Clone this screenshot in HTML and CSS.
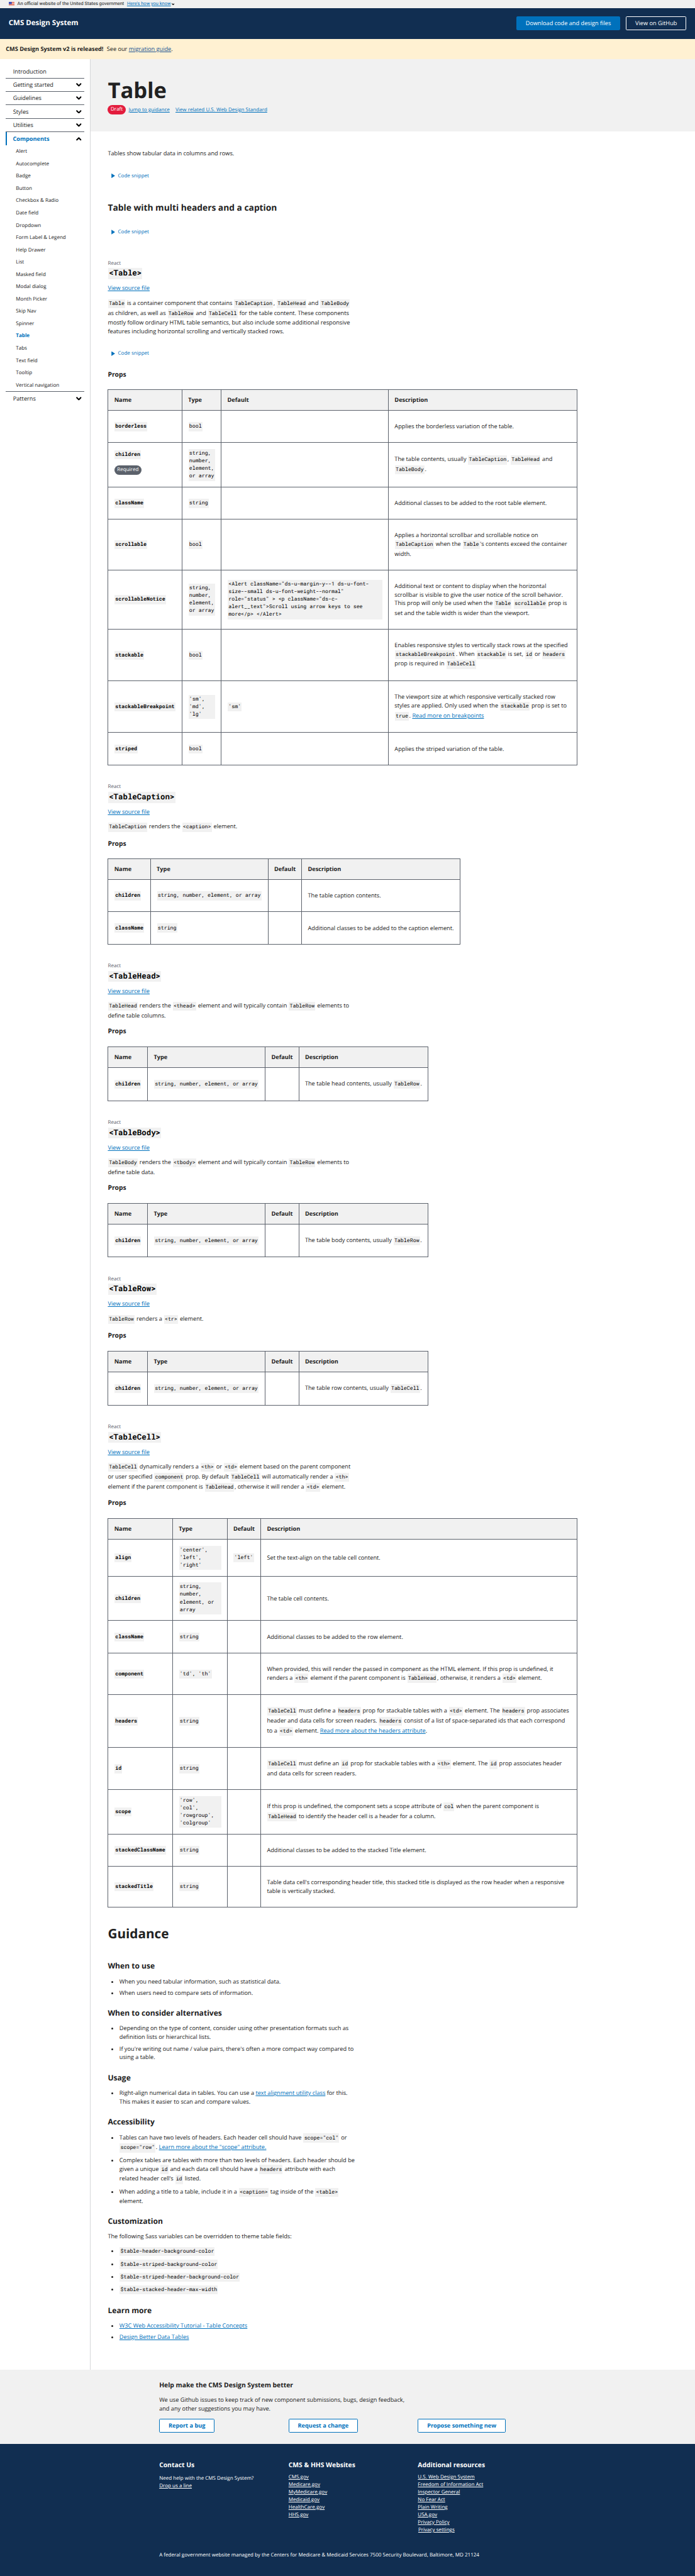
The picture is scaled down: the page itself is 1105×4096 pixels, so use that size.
FILE: index.html
```html
<!DOCTYPE html>
<html lang="en">
<head>
<meta charset="utf-8">
<title>Table - CMS Design System</title>
<link rel="stylesheet" href="styles.css">
</head>
<body>
<svg class="defs" aria-hidden="true">
  <symbol id="chevron" viewBox="0 0 15 10"><path d="M2 2.2 7.5 7.8 13 2.2" fill="none" stroke="#000" stroke-width="3.6" stroke-linejoin="round" stroke-linecap="round"/></symbol>
</svg>

<div class="gov-banner">
  <svg class="flag" viewBox="0 0 16 11"><rect width="16" height="11" fill="#fff"/><path d="M0 .8h16M0 3.2h16M0 5.6h16M0 8h16M0 10.4h16" stroke="#db3e1f" stroke-width="1.3"/><rect width="8" height="6.2" fill="#1e33b1"/><path d="M1 1.5h6M1 3.2h6M1 4.9h6" stroke="#fff" stroke-width=".7" stroke-dasharray=".8 1"/></svg>
  <span>An official website of the United States government</span>
  <a class="banner-link" href="#">Here's how you know</a><svg class="banner-chevron"><use href="#chevron"/></svg>
</div>

<header class="site-header">
  <span class="site-title">CMS Design System</span>
  <nav class="header-actions">
    <a class="btn btn-primary" href="#">Download code and design files</a>
    <a class="btn btn-ghost" href="#">View on GitHub</a>
  </nav>
</header>

<div class="release-note"><b>CMS Design System v2 is released!</b><span>See our <a href="#">migration guide</a>.</span></div>

<div class="layout">
  <aside class="sidebar">
    <ul class="nav">
      <li class="nav-item">Introduction</li>
      <li class="nav-item">Getting started<svg class="chev"><use href="#chevron"/></svg></li>
      <li class="nav-item">Guidelines<svg class="chev"><use href="#chevron"/></svg></li>
      <li class="nav-item">Styles<svg class="chev"><use href="#chevron"/></svg></li>
      <li class="nav-item">Utilities<svg class="chev"><use href="#chevron"/></svg></li>
      <li class="nav-item nav-open">Components<svg class="chev chev-up"><use href="#chevron"/></svg></li>
    </ul>
    <ul class="subnav">
      <li>Alert</li><li>Autocomplete</li><li>Badge</li><li>Button</li><li>Checkbox &amp; Radio</li><li>Date field</li><li>Dropdown</li><li>Form Label &amp; Legend</li><li>Help Drawer</li><li>List</li><li>Masked field</li><li>Modal dialog</li><li>Month Picker</li><li>Skip Nav</li><li>Spinner</li><li class="current">Table</li><li>Tabs</li><li>Text field</li><li>Tooltip</li><li>Vertical navigation</li>
    </ul>
    <ul class="nav">
      <li class="nav-item nav-last">Patterns<svg class="chev"><use href="#chevron"/></svg></li>
    </ul>
  </aside>

  <main class="main">
    <div class="hero">
      <h1>Table</h1>
      <div class="hero-links"><span class="badge badge-draft">Draft</span><a href="#">Jump to guidance</a><a href="#">View related U.S. Web Design Standard</a></div>
    </div>

    <div class="content">
      <p class="intro">Tables show tabular data in columns and rows.</p>
      <div class="snippet">Code snippet</div>
      <h3 class="example-title">Table with multi headers and a caption</h3>
      <div class="snippet">Code snippet</div>

      <section class="component component-first">
        <div class="eyebrow">React</div>
        <h3 class="component-name"><code>&lt;Table&gt;</code></h3>
        <a class="source" href="#">View source file</a>
        <p class="desc desc-main"><code>Table</code> is a container component that contains <code>TableCaption</code>, <code>TableHead</code> and <code>TableBody</code> as children, as well as <code>TableRow</code> and <code>TableCell</code> for the table content. These components mostly follow ordinary HTML table semantics, but also include some additional responsive features including horizontal scrolling and vertically stacked rows.</p>
        <div class="snippet">Code snippet</div>
        <h4 class="props-title">Props</h4>
        <table class="props props-table">
          <thead><tr><th class="name">Name</th><th class="type">Type</th><th class="default">Default</th><th>Description</th></tr></thead>
          <tbody>
            <tr class="h89"><th><code>borderless</code></th><td><code>bool</code></td><td></td><td>Applies the borderless variation of the table.</td></tr>
            <tr class="h123"><th class="with-badge"><code>children</code><span class="badge badge-required">Required</span></th><td><code>string, number, element, or array</code></td><td></td><td>The table contents, usually <code>TableCaption</code>, <code>TableHead</code> and <code>TableBody</code>.</td></tr>
            <tr class="h89"><th><code>className</code></th><td><code>string</code></td><td></td><td>Additional classes to be added to the root table element.</td></tr>
            <tr class="h140"><th><code>scrollable</code></th><td><code>bool</code></td><td></td><td>Applies a horizontal scrollbar and scrollable notice on <code>TableCaption</code> when the <code>Table</code>'s contents exceed the container width.</td></tr>
            <tr class="h164"><th><code>scrollableNotice</code></th><td><code>string, number, element, or array</code></td><td><code>&lt;Alert className="ds-u-margin-y--1 ds-u-font-size--small ds-u-font-weight--normal" role="status" &gt; &lt;p className="ds-c-alert__text"&gt;Scroll using arrow keys to see more&lt;/p&gt; &lt;/Alert&gt;</code></td><td>Additional text or content to display when the horizontal scrollbar is visible to give the user notice of the scroll behavior. This prop will only be used when the <code>Table</code> <code>scrollable</code> prop is set and the table width is wider than the viewport.</td></tr>
            <tr class="h143"><th><code>stackable</code></th><td><code>bool</code></td><td></td><td>Enables responsive styles to vertically stack rows at the specified <code>stackableBreakpoint</code>. When <code>stackable</code> is set, <code>id</code> or <code>headers</code> prop is required in <code>TableCell</code></td></tr>
            <tr class="h143"><th><code>stackableBreakpoint</code></th><td><code>'sm', 'md', 'lg'</code></td><td><code>'sm'</code></td><td>The viewport size at which responsive vertically stacked row styles are applied. Only used when the <code>stackable</code> prop is set to <code>true</code>. <a href="#">Read more on breakpoints</a></td></tr>
            <tr class="h89"><th><code>striped</code></th><td><code>bool</code></td><td></td><td>Applies the striped variation of the table.</td></tr>
          </tbody>
        </table>
      </section>

      <section class="component">
        <div class="eyebrow">React</div>
        <h3 class="component-name"><code>&lt;TableCaption&gt;</code></h3>
        <a class="source" href="#">View source file</a>
        <p class="desc desc-1"><code>TableCaption</code> renders the <code>&lt;caption&gt;</code> element.</p>
        <h4 class="props-title">Props</h4>
        <table class="props props-caption">
          <thead><tr><th class="name">Name</th><th class="type">Type</th><th class="default">Default</th><th>Description</th></tr></thead>
          <tbody>
            <tr class="h89"><th><code>children</code></th><td><code>string, number, element, or array</code></td><td></td><td>The table caption contents.</td></tr>
            <tr class="h89"><th><code>className</code></th><td><code>string</code></td><td></td><td>Additional classes to be added to the caption element.</td></tr>
          </tbody>
        </table>
      </section>

      <section class="component">
        <div class="eyebrow">React</div>
        <h3 class="component-name"><code>&lt;TableHead&gt;</code></h3>
        <a class="source" href="#">View source file</a>
        <p class="desc desc-2"><code>TableHead</code> renders the <code>&lt;thead&gt;</code> element and will typically contain <code>TableRow</code> elements to define table columns.</p>
        <h4 class="props-title">Props</h4>
        <table class="props props-small">
          <thead><tr><th class="name">Name</th><th class="type">Type</th><th class="default">Default</th><th>Description</th></tr></thead>
          <tbody>
            <tr class="h92"><th><code>children</code></th><td><code>string, number, element, or array</code></td><td></td><td>The table head contents, usually <code>TableRow</code>.</td></tr>
          </tbody>
        </table>
      </section>

      <section class="component">
        <div class="eyebrow">React</div>
        <h3 class="component-name"><code>&lt;TableBody&gt;</code></h3>
        <a class="source" href="#">View source file</a>
        <p class="desc desc-2"><code>TableBody</code> renders the <code>&lt;tbody&gt;</code> element and will typically contain <code>TableRow</code> elements to define table data.</p>
        <h4 class="props-title">Props</h4>
        <table class="props props-small">
          <thead><tr><th class="name">Name</th><th class="type">Type</th><th class="default">Default</th><th>Description</th></tr></thead>
          <tbody>
            <tr class="h92"><th><code>children</code></th><td><code>string, number, element, or array</code></td><td></td><td>The table body contents, usually <code>TableRow</code>.</td></tr>
          </tbody>
        </table>
      </section>

      <section class="component">
        <div class="eyebrow">React</div>
        <h3 class="component-name"><code>&lt;TableRow&gt;</code></h3>
        <a class="source" href="#">View source file</a>
        <p class="desc desc-1"><code>TableRow</code> renders a <code>&lt;tr&gt;</code> element.</p>
        <h4 class="props-title">Props</h4>
        <table class="props props-small">
          <thead><tr><th class="name">Name</th><th class="type">Type</th><th class="default">Default</th><th>Description</th></tr></thead>
          <tbody>
            <tr class="h92"><th><code>children</code></th><td><code>string, number, element, or array</code></td><td></td><td>The table row contents, usually <code>TableCell</code>.</td></tr>
          </tbody>
        </table>
      </section>

      <section class="component">
        <div class="eyebrow">React</div>
        <h3 class="component-name"><code>&lt;TableCell&gt;</code></h3>
        <a class="source" href="#">View source file</a>
        <p class="desc desc-3"><code>TableCell</code> dynamically renders a <code>&lt;th&gt;</code> or <code>&lt;td&gt;</code> element based on the parent component or user specified <code>component</code> prop. By default <code>TableCell</code> will automatically render a <code>&lt;th&gt;</code> element if the parent component is <code>TableHead</code>, otherwise it will render a <code>&lt;td&gt;</code> element.</p>
        <h4 class="props-title">Props</h4>
        <table class="props props-cell">
          <thead><tr><th class="name">Name</th><th class="type">Type</th><th class="default">Default</th><th>Description</th></tr></thead>
          <tbody>
            <tr class="h102"><th><code>align</code></th><td><code class="block">'center',<br>'left',<br>'right'</code></td><td><code>'left'</code></td><td>Set the text-align on the table cell content.</td></tr>
            <tr class="h123"><th><code>children</code></th><td><code>string, number, element, or array</code></td><td></td><td>The table cell contents.</td></tr>
            <tr class="h89"><th><code>className</code></th><td><code>string</code></td><td></td><td>Additional classes to be added to the row element.</td></tr>
            <tr class="h116"><th><code>component</code></th><td><code>'td', 'th'</code></td><td></td><td>When provided, this will render the passed in component as the HTML element. If this prop is undefined, it renders a <code>&lt;th&gt;</code> element if the parent component is <code>TableHead</code>, otherwise, it renders a <code>&lt;td&gt;</code> element.</td></tr>
            <tr class="h146"><th><code>headers</code></th><td><code>string</code></td><td></td><td><code>TableCell</code> must define a <code>headers</code> prop for stackable tables with a <code>&lt;td&gt;</code> element. The <code>headers</code> prop associates header and data cells for screen readers. <code>headers</code> consist of a list of space-separated ids that each correspond to a <code>&lt;td&gt;</code> element. <a href="#">Read more about the headers attribute</a>.</td></tr>
            <tr class="h116"><th><code>id</code></th><td><code>string</code></td><td></td><td><code>TableCell</code> must define an <code>id</code> prop for stackable tables with a <code>&lt;th&gt;</code> element. The <code>id</code> prop associates header and data cells for screen readers.</td></tr>
            <tr class="h123"><th><code>scope</code></th><td><code class="block">'row',<br>'col',<br>'rowgroup',<br>'colgroup'</code></td><td></td><td>If this prop is undefined, the component sets a scope attribute of <code>col</code> when the parent component is<br><code>TableHead</code> to identify the header cell is a header for a column.</td></tr>
            <tr class="h89"><th><code>stackedClassName</code></th><td><code>string</code></td><td></td><td>Additional classes to be added to the stacked Title element.</td></tr>
            <tr class="h113"><th><code>stackedTitle</code></th><td><code>string</code></td><td></td><td>Table data cell's corresponding header title, this stacked title is displayed as the row header when a responsive table is vertically stacked.</td></tr>
          </tbody>
        </table>
      </section>

      <section class="guidance">
        <h2>Guidance</h2>
        <div class="topic">
          <h3>When to use</h3>
          <ul><li>When you need tabular information, such as statistical data.</li><li>When users need to compare sets of information.</li></ul>
        </div>
        <div class="topic topic-alt">
          <h3>When to consider alternatives</h3>
          <ul><li>Depending on the type of content, consider using other presentation formats such as definition lists or hierarchical lists.</li><li>If you're writing out name / value pairs, there's often a more compact way compared to using a table.</li></ul>
        </div>
        <div class="topic topic-usage">
          <h3>Usage</h3>
          <ul><li>Right-align numerical data in tables. You can use a <a href="#">text alignment utility class</a> for this. This makes it easier to scan and compare values.</li></ul>
        </div>
        <div class="topic topic-a11y">
          <h3>Accessibility</h3>
          <ul>
            <li>Tables can have two levels of headers. Each header cell should have <code>scope="col"</code> or <code>scope="row"</code>. <a href="#">Learn more about the "scope" attribute.</a></li>
            <li>Complex tables are tables with more than two levels of headers. Each header should be given a unique <code>id</code> and each data cell should have a <code>headers</code> attribute with each<br>related header cell’s <code>id</code> listed.</li>
            <li>When adding a title to a table, include it in a <code>&lt;caption&gt;</code> tag inside of the <code>&lt;table&gt;</code> element.</li>
          </ul>
        </div>
        <div class="topic topic-custom">
          <h3>Customization</h3>
          <p>The following Sass variables can be overridden to theme table fields:</p>
          <ul class="variables"><li><code>$table-header-background-color</code></li><li><code>$table-striped-background-color</code></li><li><code>$table-striped-header-background-color</code></li><li><code>$table-stacked-header-max-width</code></li></ul>
        </div>
        <div class="topic topic-more">
          <h3>Learn more</h3>
          <ul><li><a href="#">W3C Web Accessibility Tutorial - Table Concepts</a></li><li><a href="#">Design Better Data Tables</a></li></ul>
        </div>
      </section>
    </div>
  </main>
</div>

<section class="feedback">
  <h4>Help make the CMS Design System better</h4>
  <p>We use Github issues to keep track of new component submissions, bugs, design feedback,<br>and any other suggestions you may have.</p>
  <div class="columns">
    <div><a class="btn btn-outline" href="#">Report a bug</a></div>
    <div><a class="btn btn-outline" href="#">Request a change</a></div>
    <div><a class="btn btn-outline" href="#">Propose something new</a></div>
  </div>
</section>

<footer class="site-footer">
  <div class="columns">
    <div>
      <h4>Contact Us</h4>
      <p>Need help with the CMS Design System?<br><a href="#">Drop us a line</a></p>
    </div>
    <div>
      <h4>CMS &amp; HHS Websites</h4>
      <ul><li><a href="#">CMS.gov</a></li><li><a href="#">Medicare.gov</a></li><li><a href="#">MyMedicare.gov</a></li><li><a href="#">Medicaid.gov</a></li><li><a href="#">HealthCare.gov</a></li><li><a href="#">HHS.gov</a></li></ul>
    </div>
    <div>
      <h4>Additional resources</h4>
      <ul><li><a href="#">U.S. Web Design System</a></li><li><a href="#">Freedom of Information Act</a></li><li><a href="#">Inspector General</a></li><li><a href="#">No Fear Act</a></li><li><a href="#">Plain Writing</a></li><li><a href="#">USA.gov</a></li><li><a href="#">Privacy Policy</a></li><li class="settings"><a href="#">Privacy settings</a></li></ul>
    </div>
  </div>
  <p class="address">A federal government website managed by the Centers for Medicare &amp; Medicaid Services 7500 Security Boulevard, Baltimore, MD 21124</p>
</footer>
</body>
</html>
```
FILE: styles.css
```css
/* One rem is 100 design pixels; the page is laid out on a 19.2rem canvas. */
html { font-size: 57.53px; }
* { box-sizing: border-box; margin: 0; padding: 0; }
body {
  font: .16rem/.24rem "Open Sans", "Noto Sans", sans-serif;
  color: #212121;
  background: #fff;
  text-rendering: geometricPrecision;
}
ul { list-style: none; }
a { color: #0071bc; text-decoration: underline; }
code {
  display: inline-block;
  margin: .01rem;
  padding: .02rem;
  font: .144rem/.21rem "Roboto Mono", "DejaVu Sans Mono", monospace;
  color: #000;
  background: #f1f1f1;
}
.defs { display: none; }

/* Government banner */
.gov-banner {
  display: flex;
  align-items: center;
  height: .22rem;
  padding-left: .24rem;
  font: .13rem/.22rem Roboto, sans-serif;
  background: #f0f0f0;
}
.flag { width: .16rem; height: .11rem; margin-right: .08rem; }
.banner-link { margin-left: .08rem; }
.banner-chevron { width: .08rem; height: .06rem; margin-left: .02rem; }

/* Header */
.site-header {
  display: flex;
  align-items: center;
  justify-content: space-between;
  height: .86rem;
  padding: 0 .24rem;
  background: #112e51;
}
.site-title { font-size: .2rem; font-weight: 700; color: #fff; }
.header-actions { display: flex; gap: .16rem; }
.btn {
  display: inline-block;
  height: .38rem;
  padding: 0 .24rem;
  border: 1px solid #0071bc;
  border-radius: .03rem;
  line-height: .34rem;
  text-decoration: none;
  white-space: nowrap;
}
.btn-primary { color: #fff; background: #0071bc; }
.btn-ghost { color: #fff; border-color: #fff; }
.btn-outline { color: #0071bc; background: #fff; font-weight: 700; }

.release-note {
  display: flex;
  align-items: center;
  gap: .09rem;
  height: .56rem;
  padding-left: .16rem;
  background: #fff1d2;
}
.release-note a { color: #205493; }

/* Sidebar */
.layout { display: flex; }
.sidebar {
  flex: none;
  width: 2.5rem;
  padding: .16rem .16rem 0;
  border-right: 1px solid #d6d7d9;
}
.nav-item {
  display: flex;
  align-items: center;
  justify-content: space-between;
  height: .37rem;
  padding: 0 .07rem 0 .2rem;
  border-bottom: 1px solid #5b616b;
}
.nav-open {
  padding-left: .16rem;
  border-left: .04rem solid #0071bc;
  border-bottom: 0;
  color: #0071bc;
  font-weight: 700;
}
.nav-last { border-bottom: 0; }
.chev { width: .15rem; height: .1rem; }
.chev-up { transform: rotate(180deg); }
.subnav { border-bottom: 1px solid #5b616b; padding-left: .28rem; font-size: .14rem; }
.subnav li { height: .34rem; line-height: .34rem; }
.subnav .current { color: #0071bc; font-weight: 700; }

/* Hero */
.main { flex: 1; }
.hero { height: 2rem; padding: .485rem 0 0 .48rem; background: #f1f1f1; }
.hero h1 { font-size: .6rem; line-height: .78rem; }
.hero-links { display: flex; align-items: center; font-size: .14rem; }
.hero-links a { margin-right: .16rem; }
.badge {
  display: inline-block;
  height: .26rem;
  padding: 0 .08rem;
  border-radius: .13rem;
  font-size: .14rem;
  font-weight: 400;
  line-height: .26rem;
  color: #fff;
}
.badge-draft { margin-right: .08rem; background: #e31c3d; }
.badge-required { display: block; width: max-content; margin: .16rem 0; background: #5b616b; }

/* Content */
.content { height: 61.86rem; padding: .48rem 0 0 .48rem; }
.snippet {
  display: flex;
  align-items: center;
  height: .21rem;
  margin-top: .395rem;
  padding-left: .1rem;
  font-size: .14rem;
  color: #0071bc;
}
.snippet::before {
  content: "";
  width: .1rem;
  height: .13rem;
  margin-right: .08rem;
  background: #0071bc;
  clip-path: polygon(0 0, 100% 50%, 0 100%);
}
.example-title { margin-top: .64rem; font-size: .24rem; line-height: .31rem; }
.component { padding-top: .495rem; }
.component-first { padding-top: .655rem; }
.eyebrow { height: .21rem; font-size: .14rem; line-height: .21rem; color: #5b616b; }
.component-name { height: .46rem; padding-top: .025rem; font-size: .24rem; line-height: .31rem; }
.component-name code { display: block; width: max-content; margin: 0 .01rem; padding: 0 .02rem; font-size: .216rem; font-weight: 700; line-height: .31rem; }
.source { display: block; width: max-content; }
.desc { width: 6.86rem; margin-top: .17rem; }
.desc-1 { height: .27rem; }
.desc-2 { height: .51rem; }
.desc-3 { height: .81rem; }
.desc-main { height: 1.02rem; }
.props-title { margin-top: .22rem; font-size: .18rem; line-height: .234rem; }
.component-first .props-title { margin-top: .37rem; }

/* Props tables */
.props { margin-top: .283rem; border-collapse: collapse; table-layout: fixed; }
.props th, .props td {
  padding: 0 .15rem 0 .16rem;
  border: 1px solid #5b616b;
  text-align: left;
  vertical-align: middle;
}
.props th code { font-weight: 700; }
.props .block { display: block; }
.props thead tr { height: .57rem; background: #f1f1f1; }
.props-table { width: 12.97rem; }
.props-table .name { width: 2.043rem; }
.props-table .type { width: 1.085rem; }
.props-table .default { width: 4.62rem; }
.props-caption { width: 9.74rem; white-space: nowrap; }
.props-caption .name { width: 1.172rem; }
.props-caption .type { width: 3.25rem; }
.props-caption .default { width: .93rem; }
.props-small { width: 8.86rem; white-space: nowrap; }
.props-small .name { width: 1.092rem; }
.props-small .type { width: 3.25rem; }
.props-small .default { width: .93rem; }
.props-cell { width: 12.97rem; }
.props-cell .name { width: 1.782rem; }
.props-cell .type { width: 1.508rem; }
.props-cell .default { width: .931rem; }
.h89 { height: .892rem; }
.h92 { height: .918rem; }
.h102 { height: 1.023rem; }
.h113 { height: 1.128rem; }
.h116 { height: 1.161rem; }
.h123 { height: 1.228rem; }
.h140 { height: 1.397rem; }
.h143 { height: 1.43rem; }
.h146 { height: 1.458rem; }
.h164 { height: 1.638rem; }

/* Guidance */
.guidance { width: 6.86rem; padding-top: .5rem; }
.guidance h2 { height: .986rem; font-size: .36rem; line-height: .468rem; }
.topic { height: 1.3rem; }
.topic-alt { height: 1.79rem; }
.topic-usage { height: 1.222rem; }
.topic-a11y { height: 2.739rem; }
.topic-custom { height: 2.46rem; }
.topic-more { height: 1rem; }
.topic h3 { margin-bottom: .163rem; font-size: .21rem; line-height: .273rem; }
.topic ul { padding-left: .32rem; list-style: disc; }
.topic li { margin-bottom: .08rem; }
.topic .variables { margin-top: .16rem; }

/* Feedback and footer */
.columns { display: grid; grid-template-columns: repeat(3, 3.574rem); }
.feedback { height: 2.05rem; padding: .32rem 0 0 4.4rem; background: #f1f1f1; }
.feedback h4, .site-footer h4 { font-size: .18rem; line-height: .234rem; }
.feedback p { margin: .16rem 0; }
.site-footer {
  height: 3.65rem;
  padding: .478rem 0 0 4.4rem;
  font-size: .14rem;
  line-height: .21rem;
  color: #fff;
  background: #112e51;
}
.site-footer a { color: #fff; }
.site-footer .columns p { margin-top: .14rem; }
.site-footer ul { margin-top: .095rem; }
.site-footer .settings { padding-left: .01rem; }
.site-footer .address { margin-top: .48rem; }
```
